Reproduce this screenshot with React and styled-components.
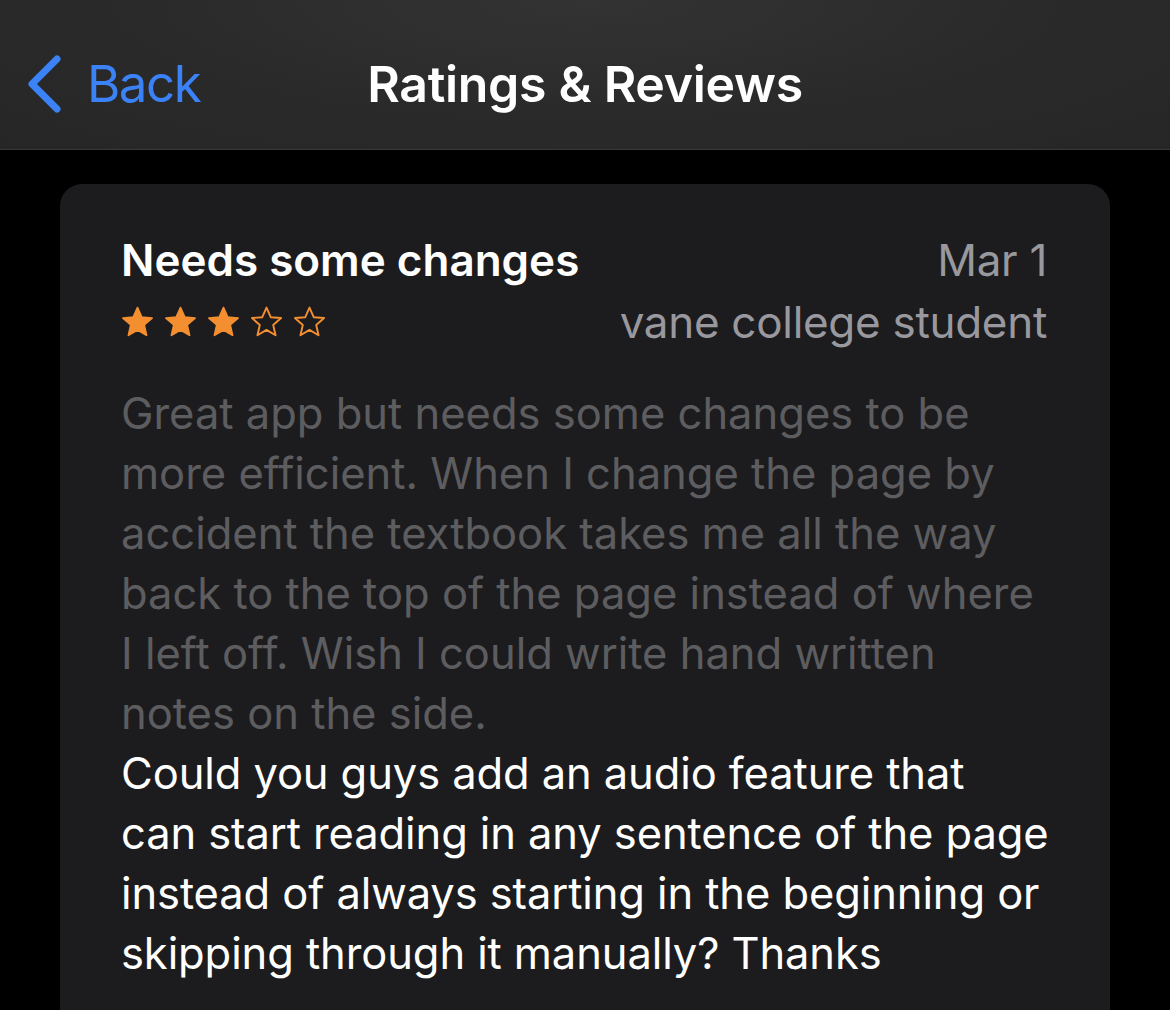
import React from 'react';
import styled, { createGlobalStyle } from 'styled-components';

const GlobalStyle = createGlobalStyle`
  html, body {
    margin: 0;
    padding: 0;
    background: #000;
  }
  body {
    font-family: Inter, "Noto Sans", "Liberation Sans", sans-serif;
    -webkit-font-smoothing: antialiased;
  }
`;

const Screen = styled.div`
  width: 1170px;
  height: 1010px;
  overflow: hidden;
  background: #000;
  display: flex;
  flex-direction: column;
`;

const NavBar = styled.header`
  height: 150px;
  box-sizing: border-box;
  flex-shrink: 0;
  background: radial-gradient(ellipse at 50% 0%, #333333 0%, #2a2a2a 55%, #262626 100%);
  border-bottom: 1px solid #383838;
  display: grid;
  grid-template-columns: 1fr auto 1fr;
  align-items: center;
`;

const BackButton = styled.a`
  display: flex;
  align-items: center;
  gap: 25px;
  color: #3a82f6;
  font-size: 51px;
  letter-spacing: -1.5px;
  cursor: pointer;
  padding: 18px 0 0 26px;
`;

const NavTitle = styled.h1`
  margin: 0;
  color: #fff;
  font-size: 50px;
  font-weight: 600;
  letter-spacing: -0.3px;
  padding-top: 18px;
`;

const Content = styled.main`
  padding: 34px 60px 0;
`;

const Card = styled.article`
  background: #1c1c1e;
  border-radius: 22px;
  padding: 45px 63px 60px 61px;
  min-height: 900px;
`;

const Head = styled.div`
  display: grid;
  grid-template-columns: 1fr auto;
  grid-auto-rows: 62px;
  align-items: center;
`;

const Title = styled.h2`
  margin: 0;
  color: #fff;
  font-size: 44px;
  font-weight: 600;
  letter-spacing: 0;
`;

const Meta = styled.span`
  color: #98989e;
  font-size: 44px;
  text-align: right;
  letter-spacing: -0.3px;
`;

const Stars = styled.div`
  display: flex;
  gap: 8px;
  margin-left: -1px;
`;

const Body = styled.p`
  margin: ${(p) => (p.$dim ? '30px 0 0' : '0 -14px 0 0')};
  font-size: 43.5px;
  line-height: 60px;
  letter-spacing: ${(p) => (p.$dim ? '0' : '-0.1px')};
  color: ${(p) => (p.$dim ? '#5d5d60' : '#ffffff')};
`;

const Star = ({ filled }) => (
  <svg width="35" height="34" viewBox="0 0 24 23">
    <path
      d="M12 1.6 L14.9 8.2 L22 8.8 L16.6 13.5 L18.2 20.6 L12 16.9 L5.8 20.6 L7.4 13.5 L2 8.8 L9.1 8.2 Z"
      fill={filled ? '#f38f30' : 'none'}
      stroke="#f38f30"
      strokeWidth={filled ? 1.2 : 1.3}
      strokeLinejoin="round"
    />
  </svg>
);

const Chevron = () => (
  <svg width="36" height="58" viewBox="0 0 36 58">
    <path d="M31 4 L6 29 L31 54" fill="none" stroke="#3a82f6" strokeWidth="7" strokeLinecap="round" strokeLinejoin="round" />
  </svg>
);

export default function App() {
  const rating = 3;
  return (
    <>
      <GlobalStyle />
      <Screen>
        <NavBar>
          <BackButton>
            <Chevron />
            Back
          </BackButton>
          <NavTitle>Ratings &amp; Reviews</NavTitle>
          <div />
        </NavBar>
        <Content>
          <Card>
            <Head>
              <Title>Needs some changes</Title>
              <Meta>Mar 1</Meta>
              <Stars>
                {[0, 1, 2, 3, 4].map((i) => (
                  <Star key={i} filled={i < rating} />
                ))}
              </Stars>
              <Meta>vane college student</Meta>
            </Head>
            <Body $dim>
              Great app but needs some changes to be more efficient. When I change the page by accident the textbook takes me all the way back to the top of the page instead of where I left off. Wish I could write hand written notes on the side.
            </Body>
            <Body>
              Could you guys add an audio feature that<br />
              can start reading in any sentence of the page instead of always starting in the beginning or skipping through it manually? Thanks
            </Body>
          </Card>
        </Content>
      </Screen>
    </>
  );
}
